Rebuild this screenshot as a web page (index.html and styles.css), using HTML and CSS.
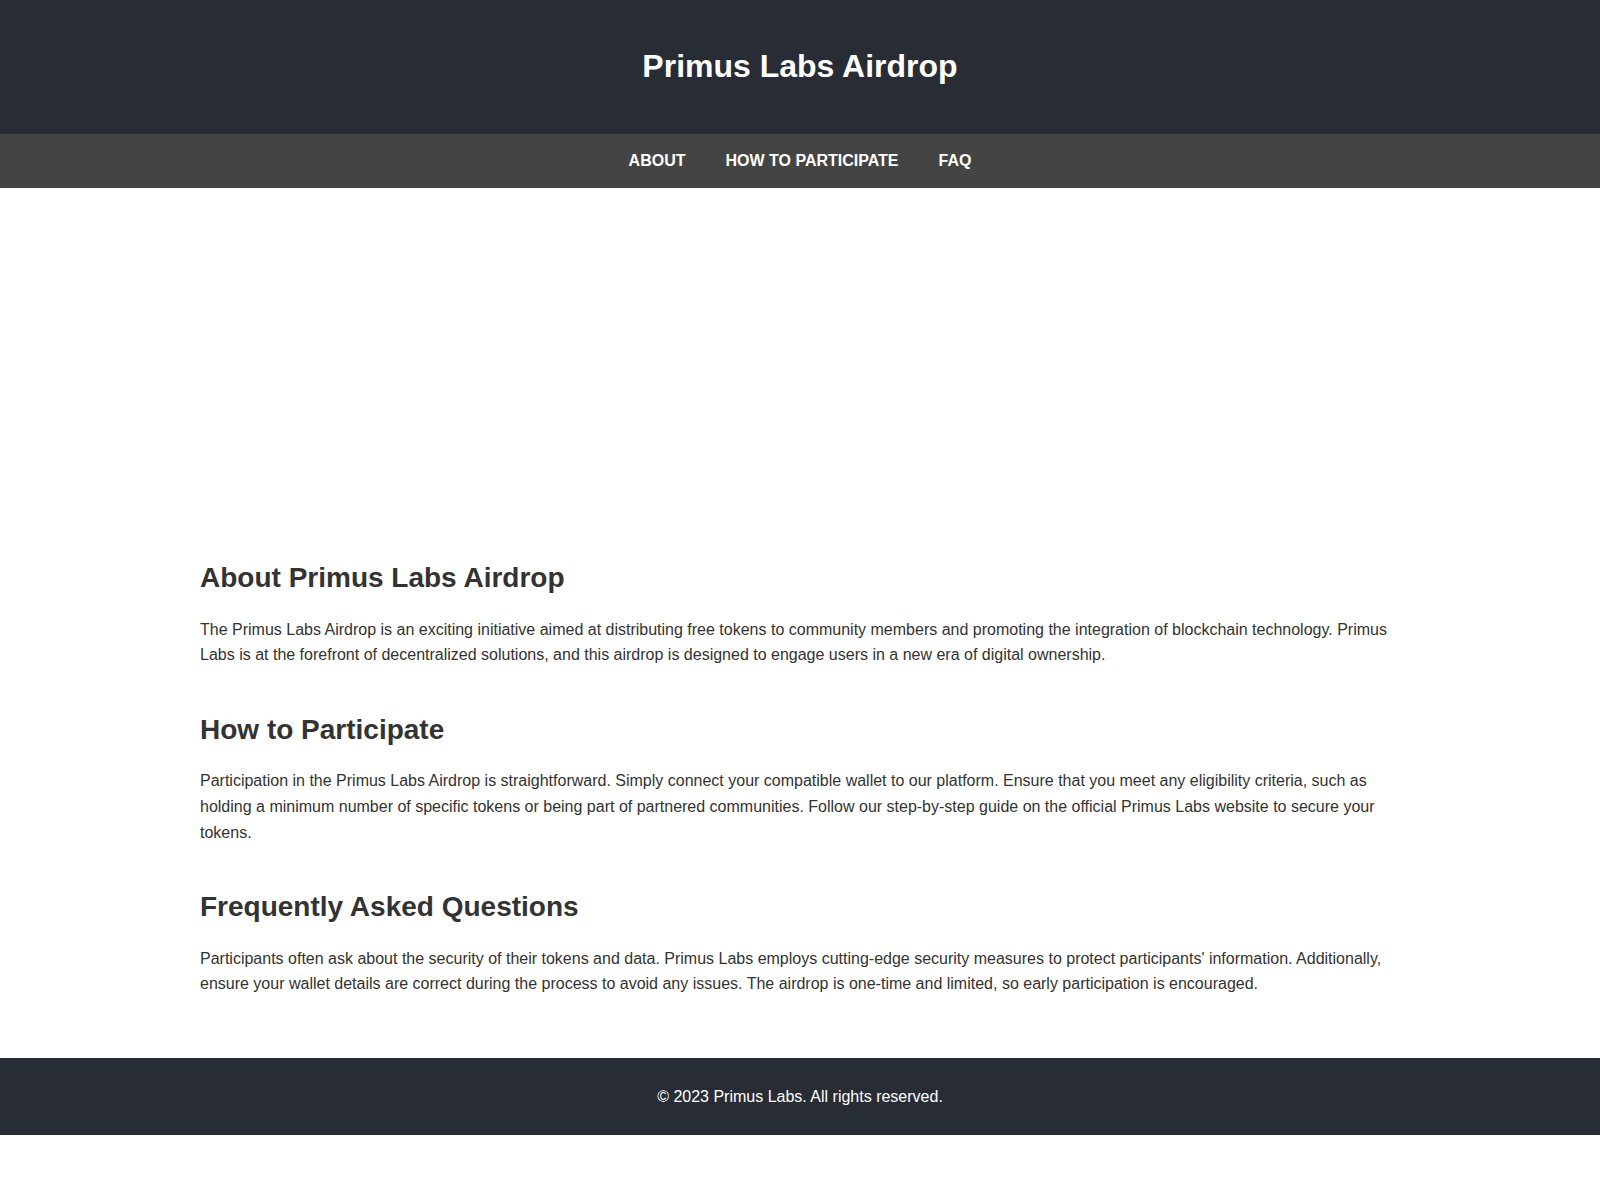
FILE: index.html
```html
<!DOCTYPE html>
<html lang="en">
<head>
  <meta charset="UTF-8" />
  <meta name="viewport" content="width=device-width, initial-scale=1.0" />
  <title>Primus Labs Airdrop</title>
  <link rel="stylesheet" href="styles.css">
</head>
<body>
  <header>
    <h1>Primus Labs Airdrop</h1>
  </header>
  <nav>
    <a href="#about">About</a>
    <a href="#participate">How to Participate</a>
    <a href="#faq">FAQ</a>
  </nav>
  <div class="hero"></div>
  <main class="container">
    <section id="about">
      <h2>About Primus Labs Airdrop</h2>
      <p>The Primus Labs Airdrop is an exciting initiative aimed at distributing free tokens to community members and promoting the integration of blockchain technology. Primus Labs is at the forefront of decentralized solutions, and this airdrop is designed to engage users in a new era of digital ownership.</p>
    </section>
    <section id="participate">
      <h2>How to Participate</h2>
      <p>Participation in the Primus Labs Airdrop is straightforward. Simply connect your compatible wallet to our platform. Ensure that you meet any eligibility criteria, such as holding a minimum number of specific tokens or being part of partnered communities. Follow our step-by-step guide on the official Primus Labs website to secure your tokens.</p>
    </section>
    <section id="faq">
      <h2>Frequently Asked Questions</h2>
      <p>Participants often ask about the security of their tokens and data. Primus Labs employs cutting-edge security measures to protect participants' information. Additionally, ensure your wallet details are correct during the process to avoid any issues. The airdrop is one-time and limited, so early participation is encouraged.</p>
    </section>
  </main>
  <footer>
    <p>&copy; 2023 Primus Labs. All rights reserved.</p>
  </footer>
</body>
</html>
```

FILE: styles.css
```css
body {
  margin: 0;
  padding: 0;
  font-family: 'Liberation Sans', Arial, sans-serif;
  line-height: 1.6;
  color: #333;
  background: #fff;
}
header {
  background: #282c34;
  color: #fff;
  text-align: center;
  padding: 40px 0 42px;
}
header h1 {
  margin: 0;
  font-size: 32px;
  line-height: 52px;
}
nav {
  background: #444;
  display: flex;
  justify-content: center;
  gap: 40px;
  padding: 14px 0;
}
nav a {
  color: #fff;
  text-decoration: none;
  font-weight: bold;
  text-transform: uppercase;
  line-height: 26px;
}
.hero {
  height: 333px;
}
.container {
  max-width: 1200px;
  margin: 0 auto;
  padding: 40px 0 16px;
}
section {
  margin-bottom: 45px;
}
h2 {
  font-size: 28px;
  line-height: 1.2;
  margin: 0 0 22px;
}
p {
  margin: 0;
}
footer {
  background: #282c34;
  color: #fff;
  text-align: center;
  padding: 26px 0 25px;
}
```
